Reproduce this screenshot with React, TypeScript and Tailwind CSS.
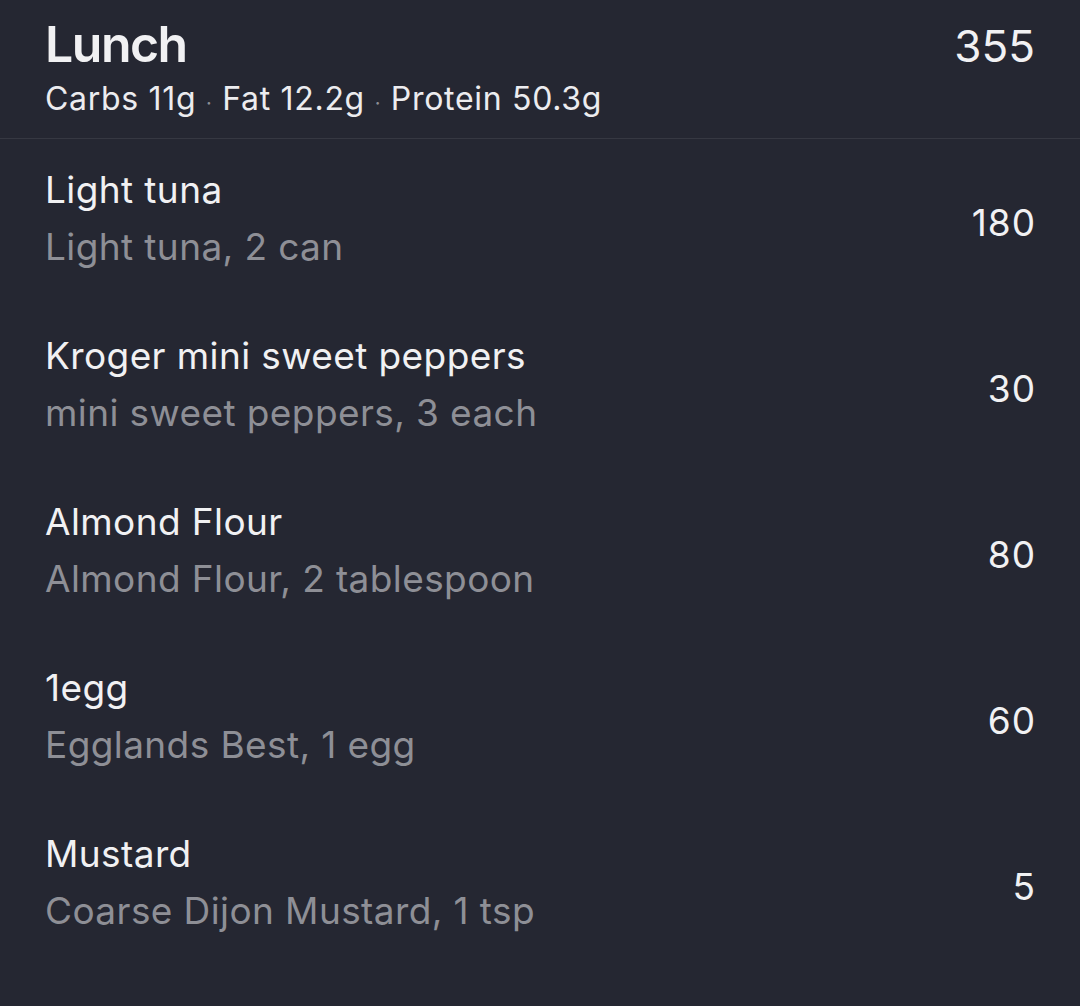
import React from "react";

const items = [
  { name: "Light tuna", desc: "Light tuna, 2 can", cal: "180" },
  { name: "Kroger mini sweet peppers", desc: "mini sweet peppers, 3 each", cal: "30" },
  { name: "Almond Flour", desc: "Almond Flour, 2 tablespoon", cal: "80" },
  { name: "1egg", desc: "Egglands Best, 1 egg", cal: "60" },
  { name: "Mustard", desc: "Coarse Dijon Mustard, 1 tsp", cal: "5" },
];

export default function App() {
  return (
    <div
      className="w-[1080px] h-[1006px] bg-[#252732] text-[#f1f1f3] overflow-hidden"
      style={{ fontFamily: "Inter, 'Noto Sans', sans-serif" }}
    >
      <div className="flex justify-between pl-[45px] pr-[45px] pt-[16px] h-[139px] border-b border-[#363842]">
        <div className="flex flex-col">
          <div className="text-[50px] leading-[56px] font-semibold tracking-[-1.5px]">Lunch</div>
          <div className="text-[32px] leading-[40px] mt-[7px] tracking-[0.7px] text-[#ececef]">
            Carbs 11g <span className="text-[#8d8e95] text-[20px]">·</span> Fat 12.2g{" "}
            <span className="text-[#8d8e95] text-[20px]">·</span> Protein 50.3g
          </div>
        </div>
        <div className="text-[44px] leading-[56px] mt-[2px]">355</div>
      </div>
      <div className="flex flex-col">
        {items.map((it) => (
          <div key={it.name} className="flex items-center justify-between pl-[45px] pr-[45px] h-[166px]">
            <div className="flex flex-col self-start pt-[22px]">
              <div className="text-[37px] leading-[57px] tracking-[0.4px]">{it.name}</div>
              <div className="text-[37px] leading-[57px] tracking-[0.4px] text-[#8e8f96]">{it.desc}</div>
            </div>
            <div className="text-[37px] leading-[57px] tracking-[1px] mr-[-1px]">{it.cal}</div>
          </div>
        ))}
      </div>
    </div>
  );
}
